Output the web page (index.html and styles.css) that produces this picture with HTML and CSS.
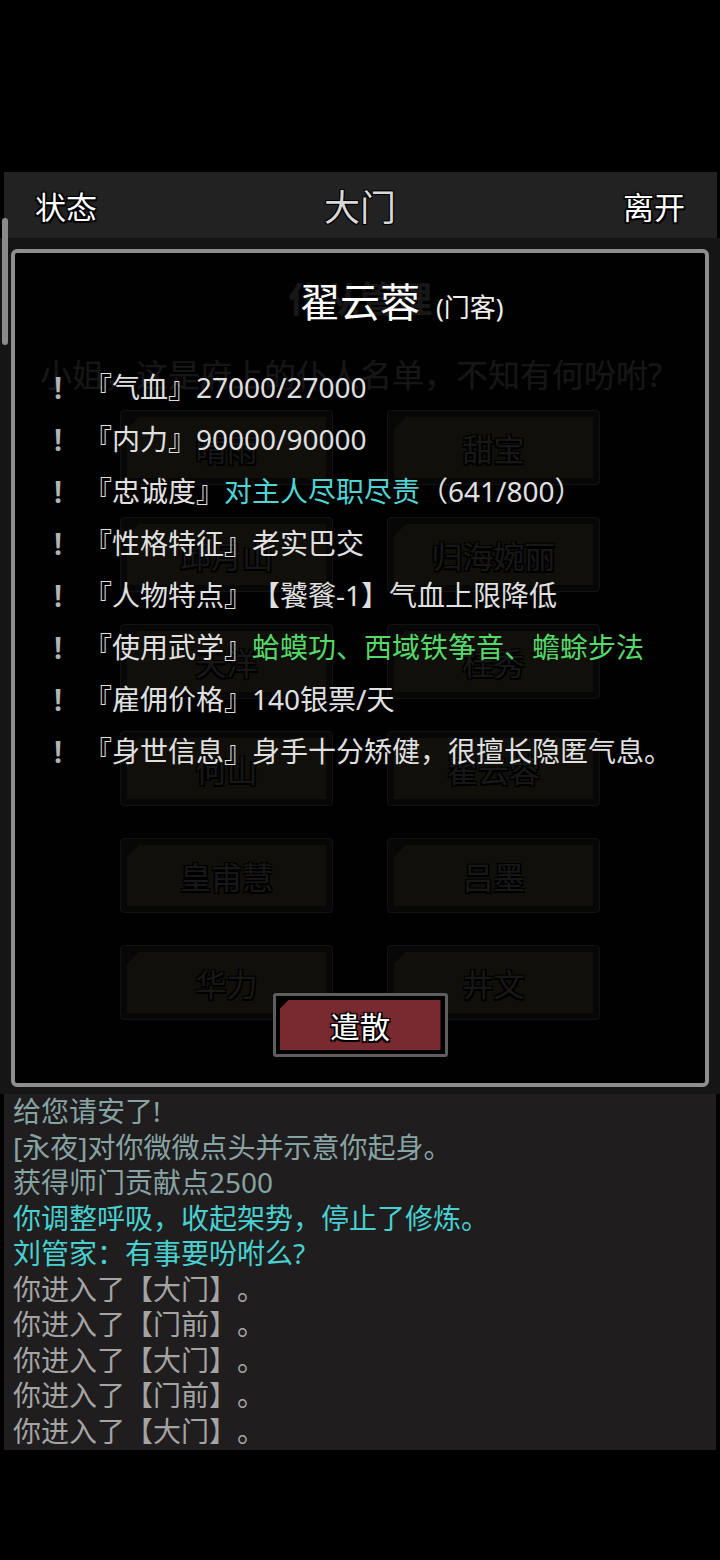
FILE: index.html
```html
<!DOCTYPE html>
<html>
<head>
    <meta charset="utf-8">
    <title>大门</title>
    <link rel="stylesheet" href="styles.css">
</head>
<body>

<div class="screen">
    <div class="scrollbar"></div>

    <div class="topbar">
        <span class="top-btn">状态</span>
        <span class="top-title">大门</span>
        <span class="top-btn">离开</span>
    </div>

    <div class="main">
        <h2 class="list-title">仆从管理</h2>
        <p class="list-desc">小姐，这是府上的仆人名单，不知有何吩咐?</p>
        <div class="servant-grid">
            <div class="servant"><span>晴雨</span></div>
            <div class="servant"><span>甜宝</span></div>
            <div class="servant"><span>邱月山</span></div>
            <div class="servant"><span>归海婉丽</span></div>
            <div class="servant"><span>天洋</span></div>
            <div class="servant"><span>桂秀</span></div>
            <div class="servant"><span>何山</span></div>
            <div class="servant"><span>翟云蓉</span></div>
            <div class="servant"><span>皇甫慧</span></div>
            <div class="servant"><span>吕墨</span></div>
            <div class="servant"><span>华力</span></div>
            <div class="servant"><span>井文</span></div>
        </div>

        <div class="modal">
            <div class="modal-title">
                <span class="name">翟云蓉</span>
                <span class="role">(门客)</span>
            </div>
            <ul class="info-list">
                <li><span class="mark">!</span><span class="info">『气血』27000/27000</span></li>
                <li><span class="mark">!</span><span class="info">『内力』90000/90000</span></li>
                <li><span class="mark">!</span><span class="info">『忠诚度』<span class="cyan">对主人尽职尽责</span>（641/800）</span></li>
                <li><span class="mark">!</span><span class="info">『性格特征』老实巴交</span></li>
                <li><span class="mark">!</span><span class="info">『人物特点』【饕餮-1】气血上限降低</span></li>
                <li><span class="mark">!</span><span class="info">『使用武学』<span class="green">蛤蟆功、西域铁筝音、蟾蜍步法</span></span></li>
                <li><span class="mark">!</span><span class="info">『雇佣价格』140银票/天</span></li>
                <li><span class="mark">!</span><span class="info">『身世信息』身手十分矫健，很擅长隐匿气息。</span></li>
            </ul>
            <button class="dismiss"><span>遣散</span></button>
        </div>
    </div>

    <div class="log">
        <p class="log-old">给您请安了!</p>
        <p class="log-old">[永夜]对你微微点头并示意你起身。</p>
        <p class="log-old">获得师门贡献点2500</p>
        <p class="log-new">你调整呼吸，收起架势，停止了修炼。</p>
        <p class="log-new">刘管家：有事要吩咐么?</p>
        <p>你进入了【大门】。</p>
        <p>你进入了【门前】。</p>
        <p>你进入了【大门】。</p>
        <p>你进入了【门前】。</p>
        <p>你进入了【大门】。</p>
    </div>
</div>

</body>
</html>
```

FILE: styles.css
```css
body {
    margin: 0;
    background-color: #000;
    font-family: "Noto Sans", "Noto Sans CJK SC", sans-serif;
    text-spacing-trim: space-all;
}

.screen {
    position: relative;
    width: 720px;
    height: 1560px;
    padding-top: 172px;
    box-sizing: border-box;
}

.scrollbar {
    position: absolute;
    left: 2px;
    top: 218px;
    width: 6px;
    height: 127px;
    background-color: #8a8a8a;
    border-radius: 3px;
    z-index: 5;
}

.topbar {
    height: 66px;
    margin: 0 3px 0 4px;
    padding: 0 32px 0 31px;
    background-color: #222;
    display: flex;
    align-items: center;
    justify-content: space-between;
}

.top-btn {
    font-size: 31px;
    color: #fff;
    text-shadow: -1.5px -1.5px 0 #000, 1.5px -1.5px 0 #000, -1.5px 1.5px 0 #000, 1.5px 1.5px 0 #000, 0 0 3px #000;
}

.top-title {
    font-size: 36px;
    color: #d8d8d8;
    text-shadow: -1px -1px 0 #000, 1px -1px 0 #000, -1px 1px 0 #000, 1px 1px 0 #000;
}

/* the list page behind the dialog */
.main {
    position: relative;
    height: 856px;
    padding-top: 37px;
    box-sizing: border-box;
    background-color: #151515;
}

.list-title {
    margin: 0;
    text-align: center;
    font-size: 36px;
    line-height: 50px;
    color: #fff;
}

.list-desc {
    margin: 30px 0 0 40px;
    font-size: 32px;
    line-height: 40px;
    color: #eee;
}

.servant-grid {
    width: 480px;
    margin: 15px auto 0;
    display: grid;
    grid-template-columns: 213px 213px;
    column-gap: 54px;
    row-gap: 32px;
}

.servant {
    height: 75px;
    padding: 6px;
    box-sizing: border-box;
    border: 1px solid #c0c0c0;
    border-radius: 4px;
    background-color: #555;
}

.servant span {
    display: flex;
    align-items: center;
    justify-content: center;
    height: 100%;
    background-color: #b4aa72;
    clip-path: polygon(12px 0, 100% 0, 100% 100%, 0 100%, 0 12px);
    font-size: 31px;
    color: #fff;
    text-shadow: -1.5px -1.5px 0 #000, 1.5px -1.5px 0 #000, -1.5px 1.5px 0 #000, 1.5px 1.5px 0 #000;
}

/* servant detail dialog */
.modal {
    position: absolute;
    top: 11px;
    left: 11px;
    right: 11px;
    height: 838px;
    box-sizing: border-box;
    border: 4px solid #8e8e8e;
    border-radius: 6px;
    background-color: rgba(0, 0, 0, 0.91);
    padding-top: 21px;
    display: flex;
    flex-direction: column;
}

.modal-title {
    display: grid;
    grid-template-columns: 1fr auto 1fr;
    align-items: baseline;
    line-height: 56px;
}

.modal-title .name {
    grid-column: 2;
    font-size: 40px;
    color: #fff;
}

.modal-title .role {
    grid-column: 3;
    justify-self: start;
    margin-left: 16px;
    font-size: 26px;
    color: #eee;
}

.info-list {
    list-style: none;
    margin: 26px 0 0;
    padding: 0 0 0 31px;
}

.info-list li {
    display: flex;
    font-size: 28px;
    line-height: 52px;
    color: #e0e0e0;
}

.mark {
    width: 24px;
    margin-right: 14px;
    text-align: center;
    font-size: 31px;
    font-weight: 600;
    color: #b4b4b4;
}

.cyan {
    color: #4fd4d4;
}

.green {
    color: #54d86a;
}

.dismiss {
    margin: auto auto 26px;
    width: 175px;
    height: 64px;
    padding: 4px;
    box-sizing: border-box;
    border: 3px solid #5e5e5e;
    border-radius: 3px;
    background-color: #000;
    font-family: inherit;
    cursor: pointer;
}

.dismiss span {
    display: flex;
    align-items: center;
    justify-content: center;
    height: 100%;
    background-color: #782a30;
    clip-path: polygon(9px 0, 100% 0, 100% 100%, 0 100%, 0 9px);
    font-size: 30px;
    color: #fff;
    text-shadow: -1.5px -1.5px 0 #000, 1.5px -1.5px 0 #000, -1.5px 1.5px 0 #000, 1.5px 1.5px 0 #000, 0 0 3px #000;
}

/* message log */
.log {
    height: 356px;
    margin: 0 4px;
    padding: 0 9px;
    background-color: #1f1d1e;
}

.log p {
    margin: 0;
    font-size: 28px;
    line-height: 35.5px;
    color: #a4a4a4;
}

.log .log-old {
    color: #88a3a3;
}

.log .log-new {
    color: #48d0d0;
}
```
